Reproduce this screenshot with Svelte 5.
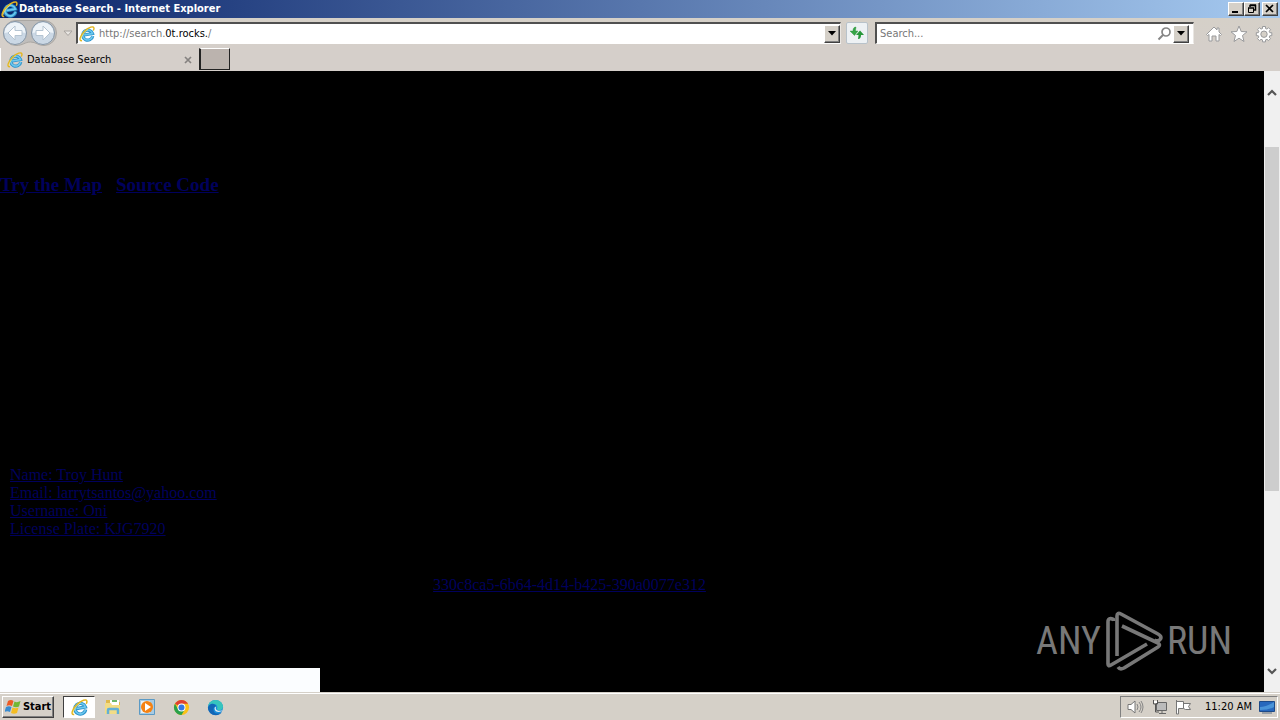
<script>
  const details = [
    'Name: Troy Hunt',
    'Email: larrytsantos@yahoo.com',
    'Username: Oni',
    'License Plate: KJG7920'
  ];
</script>

{#snippet ieIcon(size)}
  <svg width={size} height={size} viewBox="0 0 16 16" aria-hidden="true">
    <g transform="rotate(-10 8 8)">
      <path d="M13.300 10.900A5 5 0 1 1 13.500 8.500H5" fill="none" stroke="#2d93cb" stroke-width="3.200" />
      <path d="M13.200 10.900A5 5 0 1 1 13.500 8.500H5" fill="none" stroke="#6cc8ef" stroke-width="1.500" />
    </g>
    <path d="M3 14.600C-.6 15.400 1.200 9.400 5.500 5.200 9.700 1.200 14.800-.6 15 2.300c0 .9-.3 1.600-.7 2.200" fill="none" stroke="#e3b51e" stroke-width="1.400" />
    <path d="M2 13.400C1.700 11.400 5.300 6.300 9 3.500" fill="none" stroke="#fae878" stroke-width=".7" />
  </svg>
{/snippet}

<div class="desktop">
  <header class="titlebar">
    {@render ieIcon(17)}
    <h1>Database Search - Internet Explorer</h1>
    <div class="window-buttons">
      <button aria-label="Minimize"><svg width="12" height="10" viewBox="0 0 12 10"><path d="M2 8h6" stroke="#000" stroke-width="2" /></svg></button>
      <button aria-label="Restore"><svg width="12" height="10" viewBox="0 0 12 10"><path d="M4 3V1.500h5.500V6H8M4 1h6M2 4h6" fill="none" stroke="#000" stroke-width="1.500" /><path d="M2.500 4v4.500h5V4" fill="none" stroke="#000" /></svg></button>
      <button class="close" aria-label="Close"><svg width="12" height="10" viewBox="0 0 12 10"><path d="m2 1 7 7m0-7L2 8" stroke="#000" stroke-width="1.700" /></svg></button>
    </div>
  </header>

  <nav class="toolbar">
    <div class="history">
      <svg class="cradle" width="58" height="28" viewBox="0 0 58 28" aria-hidden="true">
        <path d="M15 1.500h28a12.500 12.500 0 0 1 0 25c-6 0-8-3.500-13.500-3.500S22 26.500 15 26.500a12.500 12.500 0 0 1 0-25Z" fill="#bfbdbb" stroke="#aaa7a3" />
      </svg>
      <button aria-label="Back"><svg width="26" height="26" viewBox="0 0 26 26"><circle cx="13" cy="13" r="11.500" fill="#cbd8e5" stroke="#8696a6" /><path d="M2.500 13a10.500 10.500 0 0 1 21 0q-10-3-21 0" fill="#edf3f8" /><path d="m13 6-7 7 7 7v-4.500h7v-5h-7Z" fill="#fff" stroke="#b4c4d2" /></svg></button>
      <button aria-label="Forward"><svg width="26" height="26" viewBox="0 0 26 26"><circle cx="13" cy="13" r="11.500" fill="#cbd8e5" stroke="#8696a6" /><path d="M2.500 13a10.500 10.500 0 0 1 21 0q-10-3-21 0" fill="#edf3f8" /><path d="m13 6 7 7-7 7v-4.500H6v-5h7Z" fill="#fff" stroke="#b4c4d2" /></svg></button>
    </div>
    <button class="recent" aria-label="Recent pages"><svg width="10" height="7" viewBox="0 0 10 7"><path d="M1 1h8L5 5.500Z" fill="#e8e5e1" stroke="#a8a4a0" /></svg></button>
    <div class="field address">
      {@render ieIcon(16)}
      <a href="http://search.0t.rocks./">http://search.<b>0t.rocks.</b>/</a>
      <button class="drop" aria-label="Show address history"><svg width="8" height="5" viewBox="0 0 8 5"><path d="M0 0h8L4 4.500Z" /></svg></button>
    </div>
    <button class="refresh" aria-label="Refresh"><svg width="16" height="16" viewBox="0 0 16 16"><path d="M7 2C4.500 2 4 4 4 6H1l4.500 4.500L9 6H6.500C6.500 4 7 3 7 2Z" fill="#35a447" stroke="#2a923b" stroke-width=".4" /><path d="M9 14c2.500 0 3-2 3-4h3l-4-4.500L7 10h2.500C9.500 12 9 13 9 14Z" fill="#27973a" /></svg></button>
    <div class="field search">
      <input type="text" aria-label="Search" placeholder="Search..." />
      <button class="find" aria-label="Find"><svg width="15" height="15" viewBox="0 0 15 15"><circle cx="9" cy="6" r="4" fill="none" stroke="#858585" stroke-width="1.700" /><path d="m6 9-4.500 4.500" stroke="#858585" stroke-width="2" /></svg></button>
      <button class="drop" aria-label="Search options"><svg width="8" height="5" viewBox="0 0 8 5"><path d="M0 0h8L4 4.500Z" /></svg></button>
    </div>
    <div class="tools">
      <button aria-label="Home"><svg width="18" height="18" viewBox="0 0 18 18"><path d="M1.500 9.500 9 2l3 3V3h2v4l2.500 2.500-1 1L14 9.500V16h-3v-5H7v5H4V9.500l-1.500 1Z" fill="#fff" stroke="#999a9c" /></svg></button>
      <button aria-label="Favorites"><svg width="18" height="18" viewBox="0 0 18 18"><path d="m9 1 2.200 5.500 5.800.3-4.500 3.700 1.500 6L9 13.200 4 16.500l1.500-6L1 6.800l5.800-.3Z" fill="#fff" stroke="#999a9c" /></svg></button>
      <button aria-label="Tools"><svg width="18" height="18" viewBox="0 0 18 18"><path d="M7.500 1.500h3v2l1.500.6 1.500-1.400 2 2-1.300 1.500.6 1.500h2v3h-2l-.6 1.400 1.300 1.500-2 2-1.500-1.300-1.500.6v2h-3v-2L6 14.300l-1.500 1.300-2-2 1.400-1.500-.6-1.400h-2v-3h2l.6-1.500-1.400-1.500 2-2L6 4.100l1.500-.6Z" fill="#fff" stroke="#999a9c" /><circle cx="9" cy="9.200" r="3.200" fill="#d5d0c8" stroke="#999a9c" /></svg></button>
    </div>
  </nav>

  <div class="tabs">
    <div class="tab">
      {@render ieIcon(16)}
      <span>Database Search</span>
      <button aria-label="Close tab"><svg width="8" height="8" viewBox="0 0 8 8"><path d="m1 1 6 6m0-6L1 7" stroke="#858280" stroke-width="1.700" /></svg></button>
    </div>
    <button class="new-tab" aria-label="New tab"></button>
  </div>

  <div class="viewport">
    <main>
      <div class="links"><a href="#map">Try the Map</a><a href="#source">Source Code</a></div>
      <ul>
        {#each details as line}
          <li><a href="#details">{line}</a></li>
        {/each}
      </ul>
      <a class="record" href="#record">330c8ca5-6b64-4d14-b425-390a0077e312</a>
      <div class="panel"></div>
      <div class="watermark">
        <span>ANY</span>
        <svg width="58" height="64" viewBox="0 0 58 64" aria-hidden="true">
          <g fill="none" stroke="#787878" stroke-width="3.600" stroke-linejoin="round">
            <path d="M8.500 12V10.500Q3 8 3 13v42q0 3 3 1l36-21" />
            <path d="M12 47V7q0-4 4-2l37 20q4 2 2.500 5-2 3-6 1" />
            <path d="m17 17 36 17q3 2 0 4L19 59q-4 2-6-1" />
          </g>
        </svg>
        <span>RUN</span>
      </div>
    </main>
    <div class="scrollbar">
      <button aria-label="Scroll up"><svg width="10" height="8" viewBox="0 0 10 8"><path d="m1 6 4-4 4 4" fill="none" stroke="#555" stroke-width="2.200" /></svg></button>
      <div class="track"><div class="thumb"></div></div>
      <button aria-label="Scroll down"><svg width="10" height="8" viewBox="0 0 10 8"><path d="m1 2 4 4 4-4" fill="none" stroke="#555" stroke-width="2.200" /></svg></button>
    </div>
  </div>

  <footer class="taskbar">
    <button class="start">
      <svg width="17" height="16" viewBox="0 0 17 16" aria-hidden="true"><path d="M3 2q3-2 5.500 0L7 7Q4 5.500 1.500 7Z" fill="#ed5b25" /><path d="M9.500 2.500Q12 4 15.500 2L14 7.500Q11 9 8 7.500Z" fill="#73b735" /><path d="M1 8q3-1.500 5.500 0L5 13q-3-1.500-5.500 0Z" fill="#388bd0" /><path d="M7.500 8.500q3 1.500 6 0L12 14q-3 1.500-6 0Z" fill="#f4bd23" /></svg>
      Start
    </button>
    <div class="pinned">
      <button class="active" aria-label="Internet Explorer">{@render ieIcon(17)}</button>
      <button aria-label="File Explorer"><svg width="18" height="18" viewBox="0 0 18 18"><path d="M2 2h5l1 2h8v10H2Z" fill="#dfb94c" /><path d="M6 2h9v8H6Z" fill="#fff" /><path d="M8 3h5" stroke="#6eb769" stroke-width="2" /><path d="M1 5h6l1 2h8v9H1Z" fill="#f2dc86" /><path d="M4 16v-4q0-1 1-1h8q1 0 1 1v4" fill="none" stroke="#62afd7" stroke-width="2.500" /></svg></button>
      <button aria-label="Media Player"><svg width="18" height="18" viewBox="0 0 18 18"><path d="M1.500 1.500h15v15h-15Z" fill="#a8cbe3" stroke="#5b9ac5" /><path d="M3 3h9v12H3Z" fill="#e9f1f5" /><circle cx="9" cy="9" r="6" fill="#f58213" /><path d="m7 5 6 4-6 4Z" fill="#fff" /></svg></button>
      <button aria-label="Chrome"><svg width="17" height="17" viewBox="0 0 18 18"><circle cx="9" cy="9" r="8" fill="#fbc116" /><path d="M9 9 2.100 5A8 8 0 0 1 15.900 5H9Z" fill="#df4032" /><path d="M2.100 5A8 8 0 0 0 9 17l3.500-6H5.500Z" fill="#29a14b" /><circle cx="9" cy="9" r="4.200" fill="#fff" /><circle cx="9" cy="9" r="3.200" fill="#3478e3" /></svg></button>
      <button aria-label="Edge"><svg width="17" height="17" viewBox="0 0 18 18"><circle cx="9" cy="9" r="8" fill="#198dda" /><path d="M1 9C1 4 5 1 9 1c5 0 8 4 8 7 0 4-5 5-6.500 2.500C12 8 10 5 6 5 3 5 1 7 1 9Z" fill="#37c4bd" /><path d="M1 9c2-5 7-5 9-1-4 0-4 5-1 7 3 1 5 0 7-1C11 20 1 17 1 9Z" fill="#1266b6" /><path d="M10 8c-2 2 0 6 6 4-2 3-8 2-8-2 0-1 1-2 2-2Z" fill="#e4edf1" /></svg></button>
    </div>
    <div class="tray">
      <svg width="17" height="16" viewBox="0 0 17 16" role="img" aria-label="Volume"><path d="M1 5.500h3L8 2v12l-4-3.500H1Z" fill="#fff" stroke="#777" /><path d="M10 5q2 3 0 6m2-8q4 5 0 10m2-11q4 6 0 12" fill="none" stroke="#858585" /></svg>
      <svg width="17" height="16" viewBox="0 0 17 16" role="img" aria-label="Network"><path d="M5.500 3.500h10v8h-10ZM8 14.500h7M11 11.500v3" fill="#bbb" stroke="#666" /><path d="M2.500 1v4h4V1M4.500 5v8H8" fill="none" stroke="#555" /><path d="M3 2h3v2H3Z" fill="#fff" /></svg>
      <svg width="17" height="16" viewBox="0 0 17 16" role="img" aria-label="Notifications"><path d="M1.500 1v14h2V9.500h5v-7h-7m7 2h7l-2 3 2 3h-5l-2-1" fill="#fff" stroke="#777" /></svg>
      <time>11:20 AM</time>
      <button aria-label="Show desktop"><svg width="16" height="14" viewBox="0 0 16 14"><path d="M.5 1.500h15v10H.5Z" fill="#2768bd" stroke="#1d4a88" /><path d="M1 7C5 7 11 5 15 2v5q-5 3-14 3Z" fill="#4a94d8" /><path d="M3 13h10" stroke="#5e7185" /></svg></button>
    </div>
  </footer>
</div>

<style>
  :global(body) { margin: 0; overflow: hidden; }
  * { box-sizing: border-box; }
  svg { display: block; flex: none; }
  button { display: flex; align-items: center; justify-content: center; flex: none; margin: 0; padding: 0; border: 0; background: none; color: #000; font: inherit; }
  .desktop { display: flex; flex-direction: column; height: 100vh; background: #d5d0c8; color: #000; font: 11px/14px "DejaVu Sans Condensed", "DejaVu Sans", sans-serif; }
  .titlebar { display: flex; align-items: center; gap: 1px; height: 18px; flex: none; padding: 0 2px 0 1px; background: linear-gradient(90deg, #0a246a, #a6caf0); color: #fff; }
  h1 { flex: 1; margin: 0; font-size: 11px; line-height: 14px; }
  .window-buttons { display: flex; }
  .window-buttons button, .drop { border: 1px solid; border-color: #fff #404040 #404040 #fff; background: #d5d0c8; box-shadow: inset -1px -1px #808080; }
  .window-buttons button { width: 16px; height: 14px; }
  .window-buttons .close { margin-left: 2px; }
  .toolbar { display: flex; align-items: center; height: 30px; flex: none; padding: 0 7px 0 1px; background: linear-gradient(#d5d0c8, #d5cfca); }
  .history { display: flex; gap: 2px; position: relative; width: 58px; padding-left: 1px; }
  .cradle { position: absolute; left: 0; top: -1px; }
  .history button { position: relative; }
  .recent { width: 17px; }
  .field { display: flex; align-items: center; height: 22px; border: 1px solid; border-color: #505050 #e9e6e2 #fff #505050; border-width: 2px 1px 1px 2px; background: #fff; }
  .address { flex: 7; padding-left: 1px; gap: 4px; }
  .address a { flex: 1; color: #777; text-decoration: none; }
  .address b { color: #000; font-weight: 400; }
  .drop { width: 16px; height: 18px; }
  .refresh { width: 22px; height: 22px; margin: 0 7px 0 5px; border: 1px solid #b8c2ca; border-radius: 2px; background: #edf1f4; }
  .search { flex: 0 1 319px; padding-right: 4px; }
  .search input { flex: 1; min-width: 0; padding: 0 3px; border: 0; outline: 0; font: inherit; }
  .search input::placeholder { color: #777; opacity: 1; }
  .find { width: 17px; }
  .tools { display: flex; gap: 7px; padding: 2px 0 0 11px; }
  .tabs { display: flex; height: 23px; flex: none; background: #d5cfca; }
  .tab { display: flex; align-items: center; gap: 4px; width: 199px; padding: 0 7px 0 6px; border-left: 1px solid #fff; }
  .tab span { flex: 1; }
  .new-tab { width: 31px; height: 22px; border: 1px solid #222; border-top-color: #fff; border-left-width: 2px; background: #bbb3ae; }
  .viewport { display: flex; flex: 1; min-height: 0; }
  main { display: flex; flex-direction: column; flex: 1; min-width: 0; position: relative; overflow: hidden; padding-top: 103px; background: #000; font: 16px/18px "Liberation Serif", serif; }
  main a { color: #00005c; }
  .links { display: flex; gap: 14px; font-size: 19px; line-height: 22px; font-weight: 700; }
  ul { margin: 270px 0 0; padding: 0 10px; list-style: none; }
  .record { margin-top: 38px; padding-right: 125px; align-self: center; }
  .panel { width: 25%; min-width: 320px; flex: 1; margin-top: 74px; background: #fbfdff; }
  .watermark { display: flex; align-items: center; gap: 4px; position: absolute; right: 32px; bottom: 19px; color: #787878; font: 38px/64px "Liberation Sans Narrow", "Roboto Condensed", "Open Sans Condensed", Roboto, sans-serif; }
  .scrollbar { display: flex; flex-direction: column; width: 16px; flex: none; background: #f0f0f0; }
  .scrollbar button { height: 43px; }
  .track { display: flex; flex-direction: column; flex: 1; padding: 33px 1px 0; }
  .thumb { height: 68.600%; flex: none; background: #cdcdcd; }
  .taskbar { display: flex; align-items: center; height: 28px; flex: none; padding: 1px 2px 0; border-top: 1px solid #d5d0c8; box-shadow: inset 0 1px #fff; background: #d5d0c8; }
  .start { gap: 1px; width: 52px; height: 22px; border: 1px solid; border-color: #fff #404040 #404040 #fff; box-shadow: inset -1px -1px #808080; font-weight: 700; }
  .pinned { display: flex; flex: 1; gap: 2px; padding-left: 9px; }
  .pinned button { width: 32px; height: 22px; }
  .pinned .active { border: 1px solid; border-color: #404040 #fff #fff #404040; background: #fff; }
  .tray { display: flex; align-items: center; gap: 7px; height: 22px; padding: 0 2px 0 6px; border: 1px solid; border-color: #808080 #fff #fff #808080; }
  time { padding-left: 6px; }
</style>
